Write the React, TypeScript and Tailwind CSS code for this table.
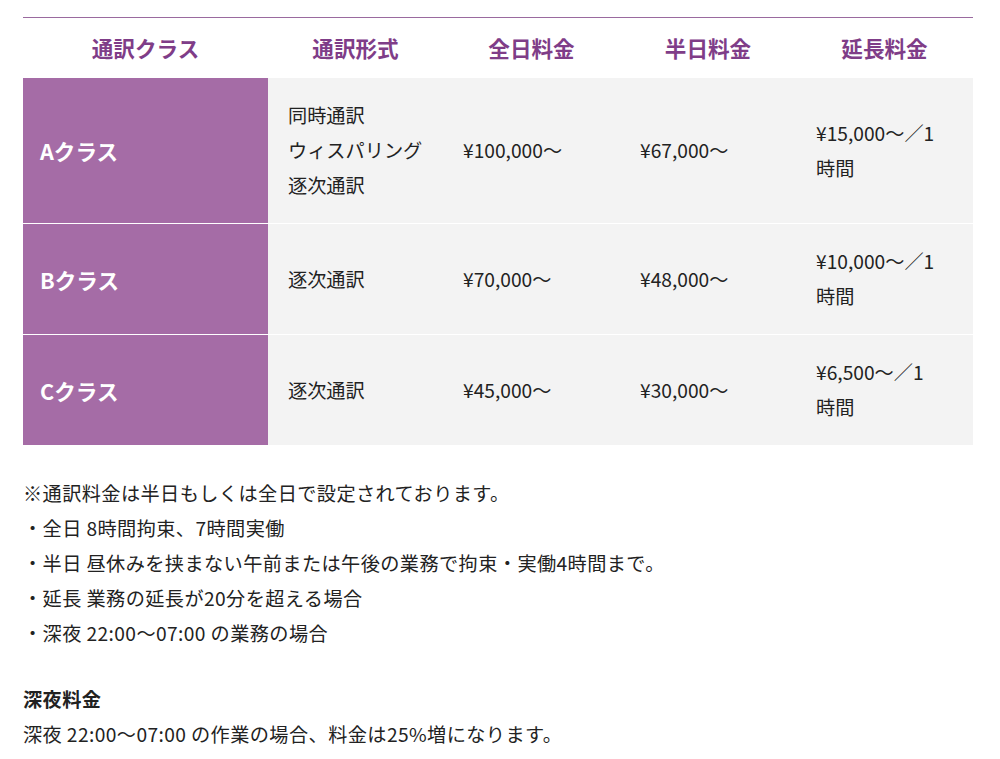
import React from 'react';

const FONT = '"Noto Sans CJK JP", "Noto Sans", sans-serif';

type Row = {
  label: string;
  styles: string[];
  full: string;
  half: string;
  extA: string;
  extB: string;
};

const ROWS: Row[] = [
  { label: 'Aクラス', styles: ['同時通訳', 'ウィスパリング', '逐次通訳'], full: '¥100,000〜', half: '¥67,000〜', extA: '¥15,000〜／1', extB: '時間' },
  { label: 'Bクラス', styles: ['逐次通訳'], full: '¥70,000〜', half: '¥48,000〜', extA: '¥10,000〜／1', extB: '時間' },
  { label: 'Cクラス', styles: ['逐次通訳'], full: '¥45,000〜', half: '¥30,000〜', extA: '¥6,500〜／1', extB: '時間' },
];

const HEADERS = ['通訳クラス', '通訳形式', '全日料金', '半日料金', '延長料金'];

const NOTES = [
  '※通訳料金は半日もしくは全日で設定されております。',
  '・全日 8時間拘束、7時間実働',
  '・半日 昼休みを挟まない午前または午後の業務で拘束・実働4時間まで。',
  '・延長 業務の延長が20分を超える場合',
  '・深夜 22:00〜07:00 の業務の場合',
];

const App: React.FC = () => {
  return (
    <div className="min-h-[759px] bg-white pt-[17px] pl-[23px] text-[#222]" style={{ fontFamily: FONT }}>
      <div className="w-[950px]">
        {/* table */}
        <div className="border-t border-[#9a6a9f]">
          <div className="grid grid-cols-[245px_175px_177px_176px_177px] h-[60px]">
            {HEADERS.map(h => (
              <div key={h} className="flex items-center justify-center text-[21.6px] font-bold text-[#7f3d88]">
                {h}
              </div>
            ))}
          </div>
          {ROWS.map((r, i) => (
            <div
              key={r.label}
              className={`grid grid-cols-[245px_175px_177px_176px_177px] text-[19.2px] leading-[35px] ${i > 0 ? 'border-t border-white' : ''}`}
            >
              <div className="bg-[#a56ca6] flex items-center py-5 pl-[17px] text-[21.6px] font-bold text-white">
                {r.label}
              </div>
              <div className="bg-[#f3f3f3] flex flex-col justify-center py-5 pl-5">
                {r.styles.map(s => (
                  <div key={s}>{s}</div>
                ))}
              </div>
              <div className="bg-[#f3f3f3] flex items-center py-5 pl-5">{r.full}</div>
              <div className="bg-[#f3f3f3] flex items-center py-5 pl-5">{r.half}</div>
              <div className="bg-[#f3f3f3] flex flex-col justify-center py-5 pl-5">
                <div>{r.extA}</div>
                <div>{r.extB}</div>
              </div>
            </div>
          ))}
        </div>

        {/* notes */}
        <div className="mt-[31px] text-[19.2px] leading-[35px] tracking-[0.4px]">
          {NOTES.map(n => (
            <p key={n}>{n}</p>
          ))}
        </div>

        <div className="mt-[31px] text-[19.2px] leading-[35px] tracking-[0.4px]">
          <p className="font-bold">深夜料金</p>
          <p>深夜 22:00〜07:00 の作業の場合、料金は25%増になります。</p>
        </div>
      </div>
    </div>
  );
};

export default App;
